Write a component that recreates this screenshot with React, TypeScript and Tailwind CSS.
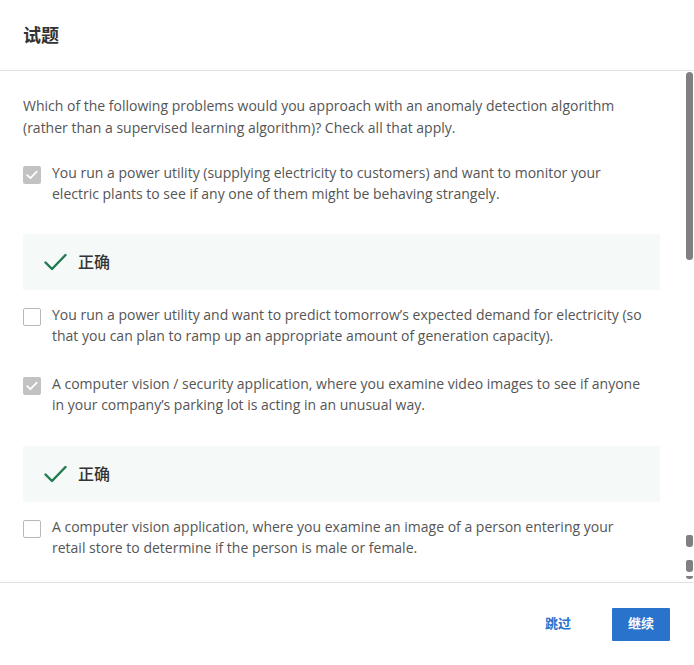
import React from "react";

const font = { fontFamily: '"Open Sans", "Noto Sans CJK SC", sans-serif' };

function Box({ checked }: { checked: boolean }) {
  return checked ? (
    <div className="mt-[4px] flex h-[18px] w-[18px] shrink-0 items-center justify-center rounded-[2px] bg-[#c2c2c2]">
      <svg width="12" height="10" viewBox="0 0 12 10" fill="none">
        <path d="M1.2 5.2 L4.4 8.2 L10.8 1.6" stroke="white" strokeWidth="1.8" strokeLinecap="round" strokeLinejoin="round" />
      </svg>
    </div>
  ) : (
    <div className="mt-[4px] h-[18px] w-[18px] shrink-0 rounded-[2px] border border-[#b8b8b8] bg-white" />
  );
}

function Option({ checked, text }: { checked: boolean; text: string }) {
  return (
    <div className="flex gap-[11px]">
      <Box checked={checked} />
      <p className="max-w-[592px] text-[14px] leading-[21px] text-[#555]">{text}</p>
    </div>
  );
}

function Correct() {
  return (
    <div className="flex h-[56px] items-center gap-[11px] bg-[#f5f9f8] pl-[21px]">
      <svg width="23" height="18" viewBox="0 0 23 18" fill="none">
        <path d="M1.5 9.5 L8 16 L21.5 2" stroke="#1f7a4d" strokeWidth="2.4" strokeLinecap="round" strokeLinejoin="round" />
      </svg>
      <span className="text-[16px] font-medium text-[#333]">正确</span>
    </div>
  );
}

export default function App() {
  return (
    <div className="relative h-[665px] w-[694px] overflow-hidden bg-white" style={font}>
      <div className="flex h-[71px] items-center border-b border-[#e2e2e2] px-[23px]">
        <h1 className="text-[18px] font-bold text-[#333]">试题</h1>
      </div>
      <div className="relative h-[511px] overflow-hidden pl-[23px] pr-[34px] pt-[24px]">
        <p className="text-[14px] leading-[22px] text-[#555]">
          Which of the following problems would you approach with an anomaly detection algorithm (rather than a supervised learning algorithm)? Check all that apply.
        </p>
        <div className="mt-[23px]">
          <Option checked text="You run a power utility (supplying electricity to customers) and want to monitor your electric plants to see if any one of them might be behaving strangely." />
        </div>
        <div className="mt-[30px]">
          <Correct />
        </div>
        <div className="mt-[14px]">
          <Option checked={false} text="You run a power utility and want to predict tomorrow’s expected demand for electricity (so that you can plan to ramp up an appropriate amount of generation capacity)." />
        </div>
        <div className="mt-[27px]">
          <Option checked text="A computer vision / security application, where you examine video images to see if anyone in your company’s parking lot is acting in an unusual way." />
        </div>
        <div className="mt-[31px]">
          <Correct />
        </div>
        <div className="mt-[14px]">
          <Option checked={false} text="A computer vision application, where you examine an image of a person entering your retail store to determine if the person is male or female." />
        </div>
        <div className="absolute right-[1px] top-[1px] h-[188px] w-[7px] rounded-full bg-[#808080]" />
        <div className="absolute right-[1px] top-[464px] h-[12px] w-[7px] rounded-b-[3px] rounded-t-[2px] bg-[#808080]" />
        <div className="absolute right-[1px] top-[489px] h-[12px] w-[7px] rounded-b-[3px] rounded-t-[2px] bg-[#808080]" />
        <div className="absolute right-[1px] top-[505px] h-[3px] w-[7px] rounded-b-[3px] bg-[#808080]" />
      </div>
      <div className="flex h-[83px] items-center justify-end gap-[41px] border-t border-[#e2e2e2] pr-[24px]">
        <button className="text-[13px] font-bold text-[#2a73cc]">跳过</button>
        <button className="h-[33px] w-[58px] rounded-[1px] bg-[#2a73cc] text-[13px] font-bold text-white">继续</button>
      </div>
    </div>
  );
}
